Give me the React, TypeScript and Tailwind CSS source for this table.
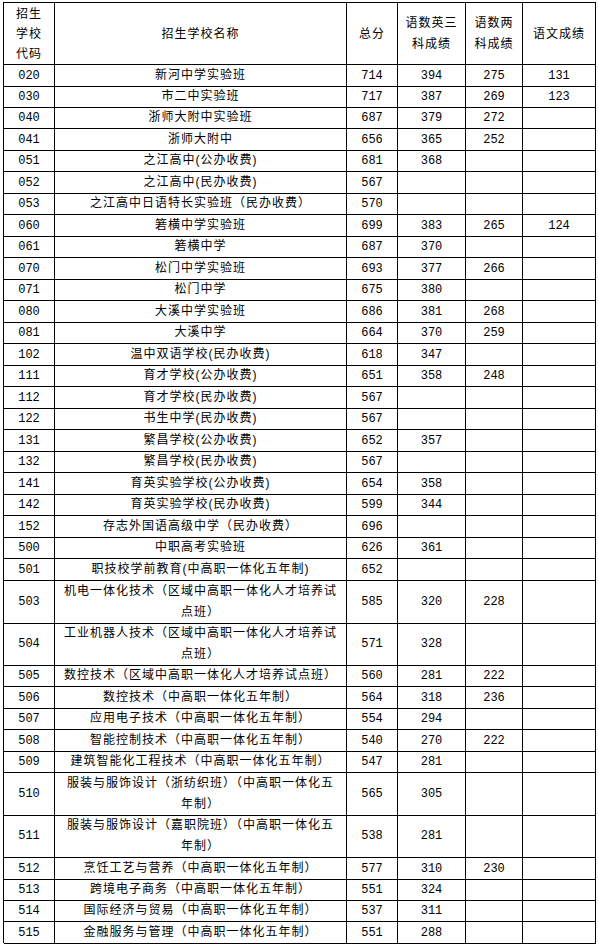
type Row = {
  code: string
  name: string[]
  total: string
  three: string
  two: string
  chinese: string
  h: string
}

// 单行行高 21/22 交替，两行 42/43
const raw: [string, string | string[], string, string, string, string][] = [
  ['020', '新河中学实验班', '714', '394', '275', '131'],
  ['030', '市二中实验班', '717', '387', '269', '123'],
  ['040', '浙师大附中实验班', '687', '379', '272', ''],
  ['041', '浙师大附中', '656', '365', '252', ''],
  ['051', '之江高中(公办收费)', '681', '368', '', ''],
  ['052', '之江高中(民办收费)', '567', '', '', ''],
  ['053', '之江高中日语特长实验班（民办收费）', '570', '', '', ''],
  ['060', '箬横中学实验班', '699', '383', '265', '124'],
  ['061', '箬横中学', '687', '370', '', ''],
  ['070', '松门中学实验班', '693', '377', '266', ''],
  ['071', '松门中学', '675', '380', '', ''],
  ['080', '大溪中学实验班', '686', '381', '268', ''],
  ['081', '大溪中学', '664', '370', '259', ''],
  ['102', '温中双语学校(民办收费)', '618', '347', '', ''],
  ['111', '育才学校(公办收费)', '651', '358', '248', ''],
  ['112', '育才学校(民办收费)', '567', '', '', ''],
  ['122', '书生中学(民办收费)', '567', '', '', ''],
  ['131', '繁昌学校(公办收费)', '652', '357', '', ''],
  ['132', '繁昌学校(民办收费)', '567', '', '', ''],
  ['141', '育英实验学校(公办收费)', '654', '358', '', ''],
  ['142', '育英实验学校(民办收费)', '599', '344', '', ''],
  ['152', '存志外国语高级中学（民办收费）', '696', '', '', ''],
  ['500', '中职高考实验班', '626', '361', '', ''],
  ['501', '职技校学前教育(中高职一体化五年制)', '652', '', '', ''],
  ['503', ['机电一体化技术（区域中高职一体化人才培养试', '点班）'], '585', '320', '228', ''],
  ['504', ['工业机器人技术（区域中高职一体化人才培养试', '点班）'], '571', '328', '', ''],
  ['505', '数控技术（区域中高职一体化人才培养试点班）', '560', '281', '222', ''],
  ['506', '数控技术（中高职一体化五年制）', '564', '318', '236', ''],
  ['507', '应用电子技术（中高职一体化五年制）', '554', '294', '', ''],
  ['508', '智能控制技术（中高职一体化五年制）', '540', '270', '222', ''],
  ['509', '建筑智能化工程技术（中高职一体化五年制）', '547', '281', '', ''],
  ['510', ['服装与服饰设计（浙纺织班）（中高职一体化五', '年制）'], '565', '305', '', ''],
  ['511', ['服装与服饰设计（嘉职院班）（中高职一体化五', '年制）'], '538', '281', '', ''],
  ['512', '烹饪工艺与营养（中高职一体化五年制）', '577', '310', '230', ''],
  ['513', '跨境电子商务（中高职一体化五年制）', '551', '324', '', ''],
  ['514', '国际经济与贸易（中高职一体化五年制）', '537', '311', '', ''],
  ['515', '金融服务与管理（中高职一体化五年制）', '551', '288', '', ''],
]

const heights = [
  'h-[21px]', 'h-[21px]', 'h-[22px]', 'h-[21px]', 'h-[22px]', 'h-[21px]', 'h-[22px]', 'h-[21px]',
  'h-[22px]', 'h-[21px]', 'h-[22px]', 'h-[21px]', 'h-[22px]', 'h-[21px]', 'h-[22px]', 'h-[21px]',
  'h-[22px]', 'h-[21px]', 'h-[22px]', 'h-[21px]', 'h-[22px]', 'h-[21px]', 'h-[22px]', 'h-[22px]',
  'h-[42px]', 'h-[42px]',
  'h-[22px]', 'h-[21px]', 'h-[22px]', 'h-[21px]', 'h-[22px]',
  'h-[42px]', 'h-[43px]',
  'h-[21px]', 'h-[21px]', 'h-[22px]', 'h-[21px]',
]

const rows: Row[] = raw.map(([code, name, total, three, two, chinese], i) => ({
  code,
  name: Array.isArray(name) ? name : [name],
  total,
  three,
  two,
  chinese,
  h: heights[i],
}))

const grid = 'grid grid-cols-[51px_292px_51px_68px_57px_73px]'
const cell = 'flex items-center justify-center border-r border-b border-black text-center'
const num = "font-['Liberation_Mono','Noto_Sans_CJK_SC',monospace] text-[12px]"

function NumCell({ v }: { v: string }) {
  return <div className={`${cell} ${num}`}>{v}</div>
}

export default function App() {
  return (
    <div className="min-h-[945px] w-[598px] bg-white pl-[3px] pt-[2px] text-black">
      <div className="w-[593px] border-t border-l border-black font-['Liberation_Sans','Noto_Sans_CJK_SC',sans-serif] text-[12px]">
        <div className={`${grid} h-[62px] tracking-[1px]`}>
          <div className={`${cell} flex-col leading-[20px]`}>
            <span>招生</span>
            <span>学校</span>
            <span>代码</span>
          </div>
          <div className={cell}>招生学校名称</div>
          <div className={cell}>总分</div>
          <div className={`${cell} flex-col leading-[21px]`}>
            <span>语数英三</span>
            <span>科成绩</span>
          </div>
          <div className={`${cell} flex-col leading-[21px]`}>
            <span>语数两</span>
            <span>科成绩</span>
          </div>
          <div className={cell}>语文成绩</div>
        </div>

        {rows.map((r) => (
          <div key={r.code} className={`${grid} ${r.h}`}>
            <NumCell v={r.code} />
            <div className={`${cell} flex-col leading-[21px] tracking-[1px] whitespace-nowrap`}>
              {r.name.map((line) => (
                <span key={line}>{line}</span>
              ))}
            </div>
            <NumCell v={r.total} />
            <NumCell v={r.three} />
            <NumCell v={r.two} />
            <NumCell v={r.chinese} />
          </div>
        ))}
      </div>
    </div>
  )
}
